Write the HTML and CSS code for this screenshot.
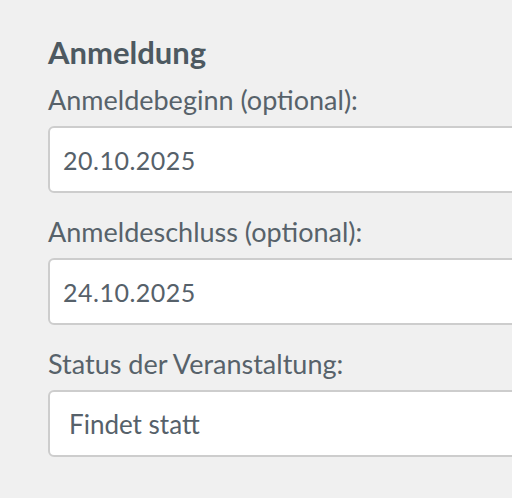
FILE: index.html
```html
<!DOCTYPE html>
<html lang="de">
<head>
<meta charset="utf-8">
<link rel="stylesheet" href="styles.css">
</head>
<body>
<section class="panel">
  <h2 class="title">Anmeldung</h2>
  <div class="field">
    <label class="label">Anmeldebeginn (optional):</label>
    <div class="input date">20.10.2025</div>
  </div>
  <div class="field">
    <label class="label">Anmeldeschluss (optional):</label>
    <div class="input date">24.10.2025</div>
  </div>
  <div class="field">
    <label class="label">Status der Veranstaltung:</label>
    <div class="input select">Findet statt</div>
  </div>
</section>
</body>
</html>
```
FILE: styles.css
```css
html, body {
  margin: 0;
  padding: 0;
  background: #f0f0f0;
  overflow: hidden;
}
body {
  font-family: Lato, "Noto Sans", sans-serif;
  color: #57626a;
}
.panel {
  padding: 36px 0 0 48px;
  width: 520px;
}
.title {
  margin: 0 0 16px 0;
  font-size: 31px;
  line-height: 32px;
  font-weight: 700;
  color: #4d5961;
}
.field {
  display: flex;
  flex-direction: column;
  gap: 10px;
  margin-bottom: 23px;
}
.label {
  font-size: 27px;
  line-height: 32px;
}
.input {
  box-sizing: border-box;
  height: 67px;
  border: 2px solid #cdcdcd;
  border-radius: 6px;
  background: #fff;
  display: flex;
  align-items: center;
  padding-left: 13px;
  color: #56616a;
}
.date {
  font-size: 25px;
  letter-spacing: 0.5px;
}
.select {
  font-size: 26px;
  padding-left: 19px;
}
```
